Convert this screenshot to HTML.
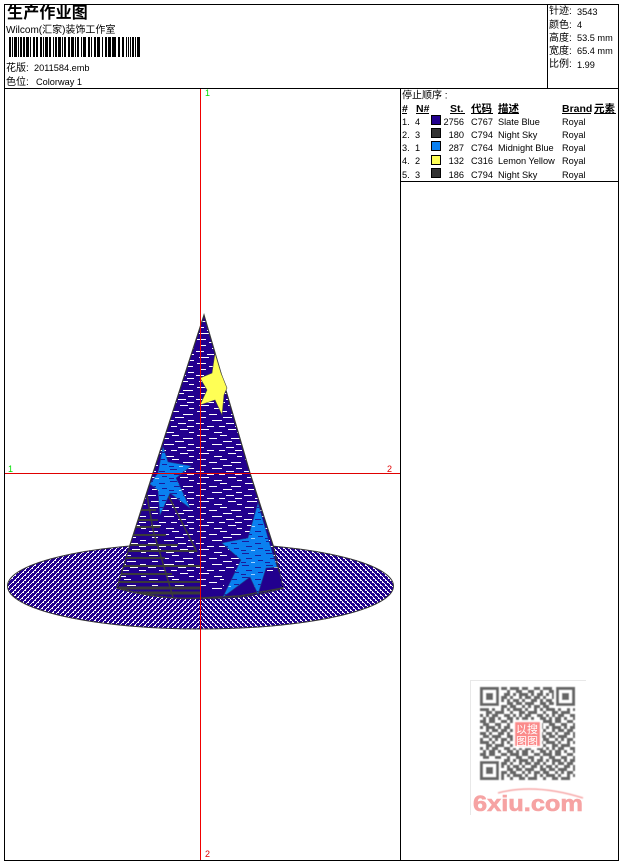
<!DOCTYPE html>
<html lang="zh">
<head>
<meta charset="utf-8">
<title>生产作业图</title>
<style>
html,body{margin:0;padding:0;background:#fff;width:620px;height:861px;overflow:hidden}
svg{display:block}
text{font-family:"Liberation Sans","WenQuanYi Zen Hei","Noto Sans CJK SC",sans-serif;font-size:9.2px;fill:#000}
.c{font-size:10px}
.b{font-weight:bold;font-size:10.5px}
.t{font-size:16px;font-weight:bold;letter-spacing:0.2px}
.g{fill:#00e000;font-size:9px}
.r{fill:#e00000;font-size:9px}
</style>
</head>
<body>
<svg width="620" height="861" viewBox="0 0 620 861" xmlns="http://www.w3.org/2000/svg">
<defs>
<pattern id="cone" width="48" height="24" patternUnits="userSpaceOnUse" x="3" y="2">
<rect width="48" height="24" fill="#22008e"/>
<g fill="#fff">
<rect x="2" y="1" width="9" height="1"/><rect x="25" y="1" width="7" height="1"/>
<rect x="14" y="4" width="8" height="1"/><rect x="36" y="4" width="10" height="1"/>
<rect x="5" y="7" width="6" height="1"/><rect x="28" y="7" width="9" height="1"/>
<rect x="17" y="10" width="10" height="1"/><rect x="41" y="10" width="6" height="1"/>
<rect x="1" y="13" width="8" height="1"/><rect x="31" y="13" width="8" height="1"/>
<rect x="12" y="16" width="7" height="1"/><rect x="24" y="16" width="6" height="1"/><rect x="40" y="16" width="7" height="1"/>
<rect x="4" y="19" width="10" height="1"/><rect x="33" y="19" width="8" height="1"/>
<rect x="19" y="22" width="8" height="1"/><rect x="42" y="22" width="5" height="1"/>
</g>
</pattern>
<pattern id="star" width="24" height="12" patternUnits="userSpaceOnUse">
<rect width="24" height="12" fill="#0a80f0"/>
<g fill="#1a1a9a">
<rect x="2" y="1" width="7" height="1"/><rect x="15" y="3" width="6" height="1"/>
<rect x="6" y="6" width="6" height="1"/><rect x="18" y="8" width="5" height="1"/>
<rect x="1" y="10" width="5" height="1"/>
</g>
<rect x="11" y="10" width="4" height="1" fill="#9cd0ff"/>
</pattern>
<pattern id="brimL" width="10" height="10" patternUnits="userSpaceOnUse">
<rect width="10" height="10" fill="#22008e"/>
<path fill="#fff" d="M4 0h2v1h-2zM3 1h1v1h-1zM2 2h2v1h-2zM1 3h1v1h-1zM0 4h1v1h-1zM9 0h1v1h-1zM8 1h1v1h-1zM7 2h2v1h-2zM6 3h1v1h-1zM5 4h1v1h-1zM4 5h2v1h-2zM3 6h1v1h-1zM2 7h1v1h-1zM1 8h2v1h-2zM0 9h1v1h-1zM9 5h1v1h-1zM8 6h1v1h-1zM7 7h2v1h-2zM6 8h1v1h-1zM5 9h1v1h-1z"/>
</pattern>
<pattern id="brimR" width="10" height="10" patternUnits="userSpaceOnUse">
<rect width="10" height="10" fill="#22008e"/>
<path fill="#fff" d="M0 0h2v1h-2zM2 1h1v1h-1zM2 2h2v1h-2zM4 3h1v1h-1zM5 4h1v1h-1zM5 0h2v1h-2zM7 1h1v1h-1zM7 2h2v1h-2zM9 3h1v1h-1zM0 4h1v1h-1zM0 5h2v1h-2zM2 6h1v1h-1zM3 7h1v1h-1zM3 8h2v1h-2zM5 9h1v1h-1zM5 5h2v1h-2zM7 6h1v1h-1zM8 7h1v1h-1zM8 8h2v1h-2zM0 9h1v1h-1z"/>
</pattern>
<pattern id="qr" width="11" height="11" patternUnits="userSpaceOnUse" patternTransform="translate(480 687) scale(3)">
<path stroke="#666" stroke-width="1" fill="none" d="M0 .5h2m1 0h2m2 0h2m1 0h1M1 1.5h2m2 0h2m2 0h1M0 2.5h1m1 0h3m1 0h1m1 0h2M2 3.500h1m1 0h2m1 0h2m1 0h1M0 4.500h2m1 0h1m2 0h2m1 0h1M1 5.500h2m1 0h3m2 0h2M0 6.500h1m2 0h1m1 0h1m1 0h2m1 0h1M0 7.500h3m1 0h1m2 0h1m1 0h1M2 8.500h2m1 0h3m2 0h1M0 9.500h1m1 0h1m1 0h2m2 0h2M1 10.500h1m1 0h2m1 0h1m2 0h2"/>
</pattern>
<clipPath id="coneClip"><path d="M204 315 L153 473 L130 545 L117 588 Q160 600 200 598 Q245 600 283 588 L273 545 L250 473 Z"/></clipPath>
<clipPath id="brimLeft"><rect x="0" y="500" width="200" height="140"/></clipPath>
<clipPath id="brimRight"><rect x="200" y="500" width="200" height="140"/></clipPath>
<filter id="soft"><feGaussianBlur stdDeviation="0.4"/></filter>
</defs>

<rect width="620" height="861" fill="#fff"/>

<!-- brim -->
<ellipse cx="200.500" cy="586" rx="193" ry="43" fill="url(#brimL)" clip-path="url(#brimLeft)"/>
<ellipse cx="200.500" cy="586" rx="193" ry="43" fill="url(#brimR)" clip-path="url(#brimRight)"/>
<ellipse cx="200.500" cy="586" rx="193" ry="43" fill="none" stroke="#333" stroke-width="1"/>

<!-- cone -->
<path d="M204 315 L153 473 L130 545 L117 588 Q160 600 200 598 Q245 600 283 588 L273 545 L250 473 Z" fill="url(#cone)"/>
<path d="M204 315 L153 473 L130 545 L117 588 Q160 600 200 598 Q245 600 283 588 L273 545 L250 473 Z" fill="none" stroke="#333" stroke-width="1.2"/>
<g clip-path="url(#coneClip)" fill="#22008e" shape-rendering="crispEdges">
<rect x="224" y="572" width="62" height="27"/>
<rect x="130" y="590" width="95" height="10"/>
</g>

<!-- dark band -->
<g clip-path="url(#coneClip)" stroke="#3a3a3a" fill="none" shape-rendering="crispEdges">
<path stroke-width="2" d="M140 510H156M137 520H158M135 527H160M132 535H166M128 545H178M126 551H196M124 558H165M122 566H200M120 574H172M118 582H200"/>
<path stroke-width="3" d="M116 588H200M128 593H200"/>
</g>
<g stroke="#3a3a3a" stroke-width="1.500" fill="none">
<path d="M147 495 L153 530 L173 597"/>
<path d="M168 495 L197 552"/>
<path d="M117 588 Q160 600 200 598 L240 596 L283 588"/>
</g>

<!-- stars -->
<polygon points="215,353 221,373 227,388 224,395 222,415 215,400 200,405 207,390 200,378 212,373" fill="#ffff55" stroke="#444" stroke-width="0.6"/>
<polygon points="163,447 168,462 191,466 176,478 190,508 170,493 160,515 158,490 150,484 158,473" fill="url(#star)" stroke="#1a4a90" stroke-width="0.6"/>
<polygon points="258,503 270,545 277,567 266,568 258,594 250,577 223,597 241,560 222,543 248,538" fill="url(#star)" stroke="#1a4a90" stroke-width="0.6"/>

<!-- axes -->
<rect x="200" y="88" width="1" height="772" fill="#f00000" shape-rendering="crispEdges"/>
<rect x="4" y="473" width="396" height="1" fill="#e00000" shape-rendering="crispEdges"/>
<text x="205" y="96" class="g">1</text>
<text x="8" y="472" class="g">1</text>
<text x="387" y="472" class="r">2</text>
<text x="205" y="857" class="r">2</text>

<!-- frame -->
<g fill="#000" shape-rendering="crispEdges">
<rect x="4" y="4" width="615" height="1"/>
<rect x="4" y="4" width="1" height="857"/>
<rect x="618" y="4" width="1" height="857"/>
<rect x="4" y="860" width="615" height="1"/>
<rect x="4" y="88" width="615" height="1"/>
<rect x="547" y="4" width="1" height="84"/>
<rect x="400" y="88" width="1" height="772"/>
<rect x="400" y="181" width="218" height="1"/>
</g>

<!-- header left -->
<text x="7" y="18" class="t">生产作业图</text>
<text x="6" y="33" class="c">Wilcom(汇家)装饰工作室</text>
<path fill="#000" shape-rendering="crispEdges" d="M9 37h2v20h-2zM12 37h1v20h-1zM14 37h3v20h-3zM18 37h1v20h-1zM20 37h2v20h-2zM23 37h2v20h-2zM26 37h3v20h-3zM30 37h1v20h-1zM33 37h2v20h-2zM36 37h2v20h-2zM40 37h2v20h-2zM43 37h1v20h-1zM45 37h3v20h-3zM49 37h2v20h-2zM53 37h1v20h-1zM55 37h2v20h-2zM58 37h3v20h-3zM62 37h1v20h-1zM64 37h2v20h-2zM68 37h2v20h-2zM71 37h3v20h-3zM75 37h1v20h-1zM77 37h2v20h-2zM81 37h1v20h-1zM83 37h3v20h-3zM88 37h2v20h-2zM91 37h1v20h-1zM94 37h2v20h-2zM97 37h3v20h-3zM102 37h1v20h-1zM105 37h2v20h-2zM108 37h3v20h-3zM112 37h4v20h-4zM118 37h2v20h-2zM122 37h2v20h-2zM126 37h1v20h-1zM128 37h1v20h-1zM130 37h1v20h-1zM132 37h2v20h-2zM135 37h1v20h-1zM137 37h3v20h-3z"/>
<text x="6" y="71" class="c">花版:</text><text x="34" y="71">2011584.emb</text>
<text x="6" y="85" class="c">色位:</text><text x="36" y="85">Colorway 1</text>

<!-- header right -->
<text x="549" y="14" class="c">针迹:</text><text x="577" y="15">3543</text>
<text x="549" y="28" class="c">颜色:</text><text x="577" y="28">4</text>
<text x="549" y="41" class="c">高度:</text><text x="577" y="41">53.5 mm</text>
<text x="549" y="54" class="c">宽度:</text><text x="577" y="54">65.4 mm</text>
<text x="549" y="67" class="c">比例:</text><text x="577" y="68">1.99</text>

<!-- table -->
<text x="402" y="98.500" class="c">停止顺序 :</text>
<text x="402" y="112" class="b">#</text>
<text x="416" y="112" class="b">N#</text>
<text x="450" y="112" class="b">St.</text>
<text x="471" y="112" class="b">代码</text>
<text x="498" y="112" class="b">描述</text>
<text x="562" y="112" class="b">Brand</text>
<text x="594" y="112" class="b">元素</text>
<path stroke="#000" stroke-width="1" shape-rendering="crispEdges" d="M402 113.500h5M416 113.500h13M450 113.500h15M471 113.500h22M498 113.500h21M562 113.500h29M594 113.500h22"/>

<g>
<text x="402" y="125">1.</text><text x="415" y="125">4</text>
<rect x="431.500" y="115.500" width="9" height="9" fill="#22008e" stroke="#000"/>
<text x="464" y="125" text-anchor="end">2756</text><text x="471" y="125">C767</text><text x="498" y="125">Slate Blue</text><text x="562" y="125">Royal</text>

<text x="402" y="138">2.</text><text x="415" y="138">3</text>
<rect x="431.500" y="128.500" width="9" height="9" fill="#333" stroke="#000"/>
<text x="464" y="138" text-anchor="end">180</text><text x="471" y="138">C794</text><text x="498" y="138">Night Sky</text><text x="562" y="138">Royal</text>

<text x="402" y="151">3.</text><text x="415" y="151">1</text>
<rect x="431.500" y="141.500" width="9" height="9" fill="#0a80f0" stroke="#000"/>
<text x="464" y="151" text-anchor="end">287</text><text x="471" y="151">C764</text><text x="498" y="151">Midnight Blue</text><text x="562" y="151">Royal</text>

<text x="402" y="164">4.</text><text x="415" y="164">2</text>
<rect x="431.500" y="155.500" width="9" height="9" fill="#ffff55" stroke="#000"/>
<text x="464" y="164" text-anchor="end">132</text><text x="471" y="164">C316</text><text x="498" y="164">Lemon Yellow</text><text x="562" y="164">Royal</text>

<text x="402" y="178">5.</text><text x="415" y="178">3</text>
<rect x="431.500" y="168.500" width="9" height="9" fill="#333" stroke="#000"/>
<text x="464" y="178" text-anchor="end">186</text><text x="471" y="178">C794</text><text x="498" y="178">Night Sky</text><text x="562" y="178">Royal</text>
</g>

<!-- watermark -->
<path d="M470.500 815V680.500H586" fill="none" stroke="#e8e8e8"/>
<g filter="url(#soft)">
<rect x="480" y="687" width="95" height="93" fill="url(#qr)"/>
<rect x="480" y="687" width="21" height="21" fill="#fff"/>
<rect x="554" y="687" width="21" height="21" fill="#fff"/>
<rect x="480" y="759" width="21" height="21" fill="#fff"/>
<path fill="#666" fill-rule="evenodd" d="M480 687h19v19h-19zM483 690v13h13v-13z"/>
<rect x="486" y="693" width="7" height="7" fill="#666"/>
<path fill="#666" fill-rule="evenodd" d="M556 687h19v19h-19zM559 690v13h13v-13z"/>
<rect x="562" y="693" width="7" height="7" fill="#666"/>
<path fill="#666" fill-rule="evenodd" d="M480 761h19v19h-19zM483 764v13h13v-13z"/>
<rect x="486" y="767" width="7" height="7" fill="#666"/>
<rect x="513" y="720" width="29" height="28" fill="#fff"/>
<rect x="515" y="722" width="25" height="24" fill="#fb8a8a"/>
<path d="M498 793 Q535 783 583 798" fill="none" stroke="#f7a8a8" stroke-width="1.5"/>
</g>
<text x="516" y="733" style="font-size:11px;fill:#fff">以搜</text>
<text x="516" y="745" style="font-size:11px;fill:#fff">图图</text>
<text x="473" y="811" textLength="110" lengthAdjust="spacingAndGlyphs" style="font-size:22px;font-weight:bold;fill:#f6a3a3;stroke:#f6a3a3;stroke-width:0.6px">6xiu.com</text>
</svg>
</body>
</html>
